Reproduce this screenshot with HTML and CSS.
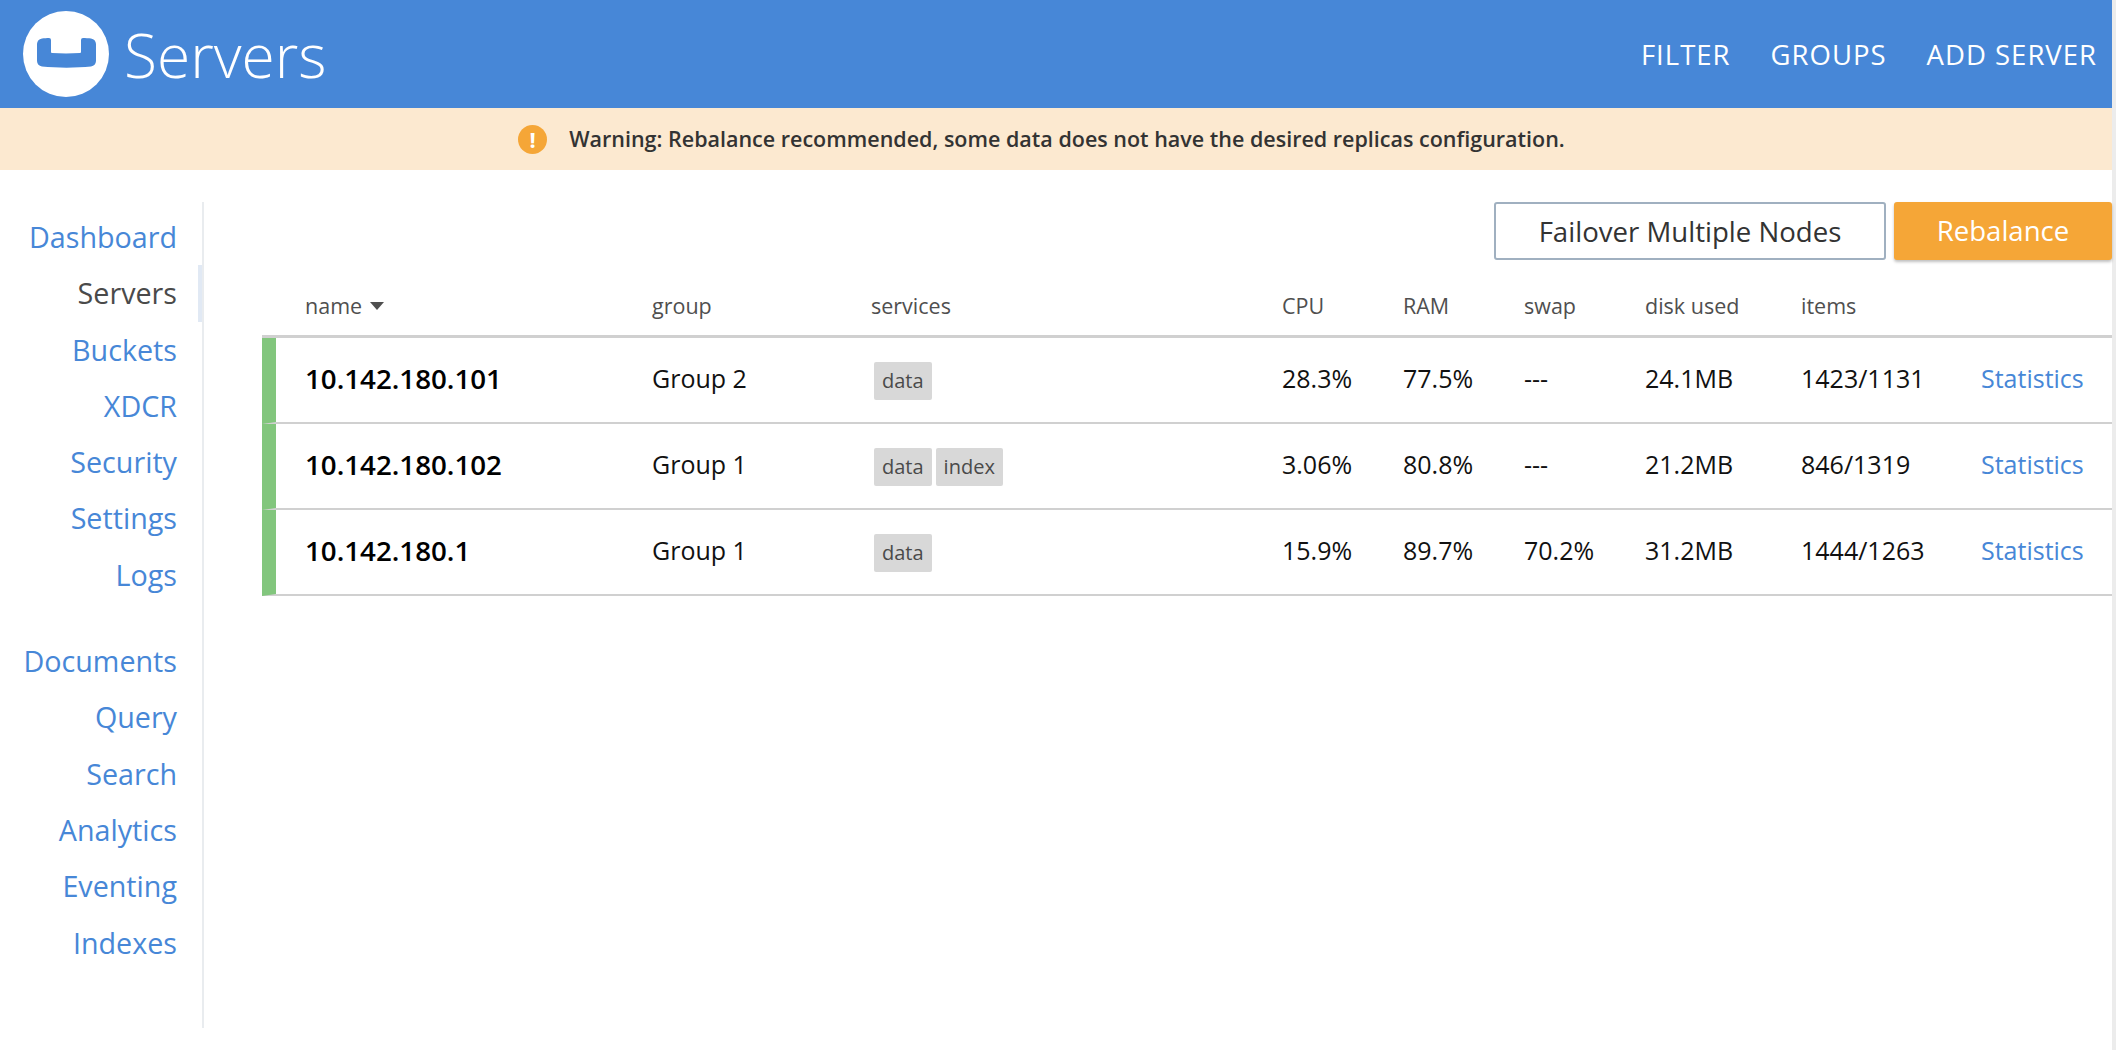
FILE: index.html
```html
<!DOCTYPE html>
<html lang="en">

<head>
    <meta charset="UTF-8" />
    <title>Servers</title>
    <link rel="stylesheet" href="styles.css">
</head>

<body>
    <div class="page">
        <header class="topbar">
            <svg class="logo" viewBox="0 0 86 86">
                <circle cx="43" cy="43" r="43" fill="#fff" />
                <path d="M14 33a6 6 0 0 1 5-5.5c2-.4 5-.6 7-.6a2 2 0 0 1 2 2V41a1 1 0 0 0 1 1c9 .5 19 .5 28 0a1 1 0 0 0 1-1V28.9a2 2 0 0 1 2-2c2 0 6 .2 8 .6a6 6 0 0 1 5 5.5v17a6 6 0 0 1-5 5.5c-15 1.5-34 1.5-49 0a6 6 0 0 1-5-5.5z" fill="#4787d7" />
            </svg>
            <h1 class="title">Servers</h1>
            <nav class="actions">
                <a>FILTER</a>
                <a>GROUPS</a>
                <a>ADD SERVER</a>
            </nav>
        </header>

        <div class="warning">
            <span class="warning-icon">!</span>
            <span>Warning: Rebalance recommended, some data does not have the desired replicas configuration.</span>
        </div>

        <div class="main">
            <aside class="sidebar">
                <ul class="side-group">
                    <li><a>Dashboard</a></li>
                    <li class="current"><a>Servers</a></li>
                    <li><a>Buckets</a></li>
                    <li><a>XDCR</a></li>
                    <li><a>Security</a></li>
                    <li><a>Settings</a></li>
                    <li><a>Logs</a></li>
                </ul>
                <ul class="side-group">
                    <li><a>Documents</a></li>
                    <li><a>Query</a></li>
                    <li><a>Search</a></li>
                    <li><a>Analytics</a></li>
                    <li><a>Eventing</a></li>
                    <li><a>Indexes</a></li>
                </ul>
            </aside>

            <section class="content">
                <div class="buttons">
                    <button class="btn-outline">Failover Multiple Nodes</button>
                    <button class="btn-orange">Rebalance</button>
                </div>

                <div class="row head">
                    <span>name <i class="caret"></i></span>
                    <span>group</span>
                    <span>services</span>
                    <span>CPU</span>
                    <span>RAM</span>
                    <span>swap</span>
                    <span>disk used</span>
                    <span>items</span>
                    <span></span>
                </div>

                <div class="row server">
                    <b>10.142.180.101</b>
                    <span>Group 2</span>
                    <span class="tags"><em>data</em></span>
                    <span>28.3%</span>
                    <span>77.5%</span>
                    <span>---</span>
                    <span>24.1MB</span>
                    <span>1423/1131</span>
                    <a>Statistics</a>
                </div>
                <div class="row server">
                    <b>10.142.180.102</b>
                    <span>Group 1</span>
                    <span class="tags"><em>data</em><em>index</em></span>
                    <span>3.06%</span>
                    <span>80.8%</span>
                    <span>---</span>
                    <span>21.2MB</span>
                    <span>846/1319</span>
                    <a>Statistics</a>
                </div>
                <div class="row server">
                    <b>10.142.180.1</b>
                    <span>Group 1</span>
                    <span class="tags"><em>data</em></span>
                    <span>15.9%</span>
                    <span>89.7%</span>
                    <span>70.2%</span>
                    <span>31.2MB</span>
                    <span>1444/1263</span>
                    <a>Statistics</a>
                </div>
            </section>
        </div>
    </div>
</body>

</html>
```

FILE: styles.css
```css
html, body {
    margin: 0;
    padding: 0;
    background-color: #fff;
}

body {
    font-family: "Open Sans", "Noto Sans", sans-serif;
    color: #333;
    overflow: hidden;
}

.page {
    width: 2112px;
    height: 1050px;
    border-right: 4px solid #ececec;
}

/* top bar */
.topbar {
    display: flex;
    align-items: center;
    height: 108px;
    padding: 0 15px 0 23px;
    background-color: #4787d7;
    color: #fff;
}

.logo {
    width: 86px;
    height: 86px;
    flex: none;
}

.title {
    margin: 0 0 0 15px;
    font-size: 60.5px;
    font-weight: 350;
}

.actions {
    display: flex;
    gap: 40px;
    margin-left: auto;
    font-size: 27.5px;
    font-weight: 500;
    letter-spacing: 1px;
}

/* warning */
.warning {
    display: flex;
    align-items: center;
    justify-content: center;
    gap: 22px;
    height: 60px;
    padding: 0 29px 2px 0;
    background-color: #fce9d0;
    font-size: 21.5px;
    font-weight: 600;
}

.warning-icon {
    width: 29px;
    height: 29px;
    margin-top: 2px;
    border-radius: 50%;
    background-color: #f5a637;
    color: #fff;
    font-size: 22px;
    font-weight: 700;
    line-height: 29px;
    text-align: center;
}

/* layout */
.main {
    display: flex;
    padding-top: 32px;
}

/* sidebar */
.sidebar {
    width: 202px;
    height: 819px;
    flex: none;
    padding-top: 7px;
    border-right: 2px solid #e9ecef;
}

.side-group {
    list-style: none;
    margin: 0 0 30px;
    padding: 0;
    text-align: right;
    font-size: 28.7px;
}

.side-group li {
    height: 56.3px;
    line-height: 56.3px;
    padding-right: 25px;
    color: #4787d7;
}

.side-group li.current {
    color: #4a4a4a;
    box-shadow: inset -4px 0 0 #e1e9f4;
}

/* content */
.content {
    flex: 1;
    padding-left: 58px;
}

.buttons {
    display: flex;
    justify-content: flex-end;
    gap: 8px;
}

.buttons button {
    height: 58px;
    font-family: inherit;
    font-size: 27.6px;
    border-radius: 3px;
}

.btn-outline {
    width: 392px;
    background-color: #fff;
    color: #333;
    border: 2px solid #a0b0c0;
}

.btn-orange {
    width: 218px;
    padding-bottom: 3px;
    background-color: #f5a637;
    color: #fff;
    border: none;
    box-shadow: 0 2px 3px rgba(0, 0, 0, 0.25);
}

/* table */
.row {
    display: grid;
    grid-template-columns: 347px 219px 411px 121px 121px 121px 156px 180px 1fr;
    align-items: center;
    padding-left: 43px;
    font-size: 25px;
}

.head {
    height: 78px;
    padding-top: 16px;
    font-size: 21.5px;
    color: #4f4f4f;
    border-bottom: 3px solid #d0d0d0;
    box-sizing: border-box;
}

.caret {
    display: inline-block;
    vertical-align: 4px;
    margin-left: 2px;
    border-left: 7px solid transparent;
    border-right: 7px solid transparent;
    border-top: 8px solid #4f4f4f;
}

.server {
    height: 86px;
    padding: 0 0 4px 29px;
    border-left: 14px solid #82c67d;
    border-bottom: 2px solid #d0d0d0;
    box-sizing: border-box;
    color: #111;
}

.server b {
    font-size: 27.7px;
    font-weight: 600;
    color: #000;
}

.server a {
    color: #4787d7;
}

.tags {
    display: flex;
    gap: 4px;
    margin-top: 5px;
    padding-left: 3px;
}

.tags em {
    padding: 5px 8px 6px;
    background-color: #d8d8d8;
    border-radius: 2px;
    color: #4a4a4a;
    font-size: 20px;
    font-style: normal;
}
```
